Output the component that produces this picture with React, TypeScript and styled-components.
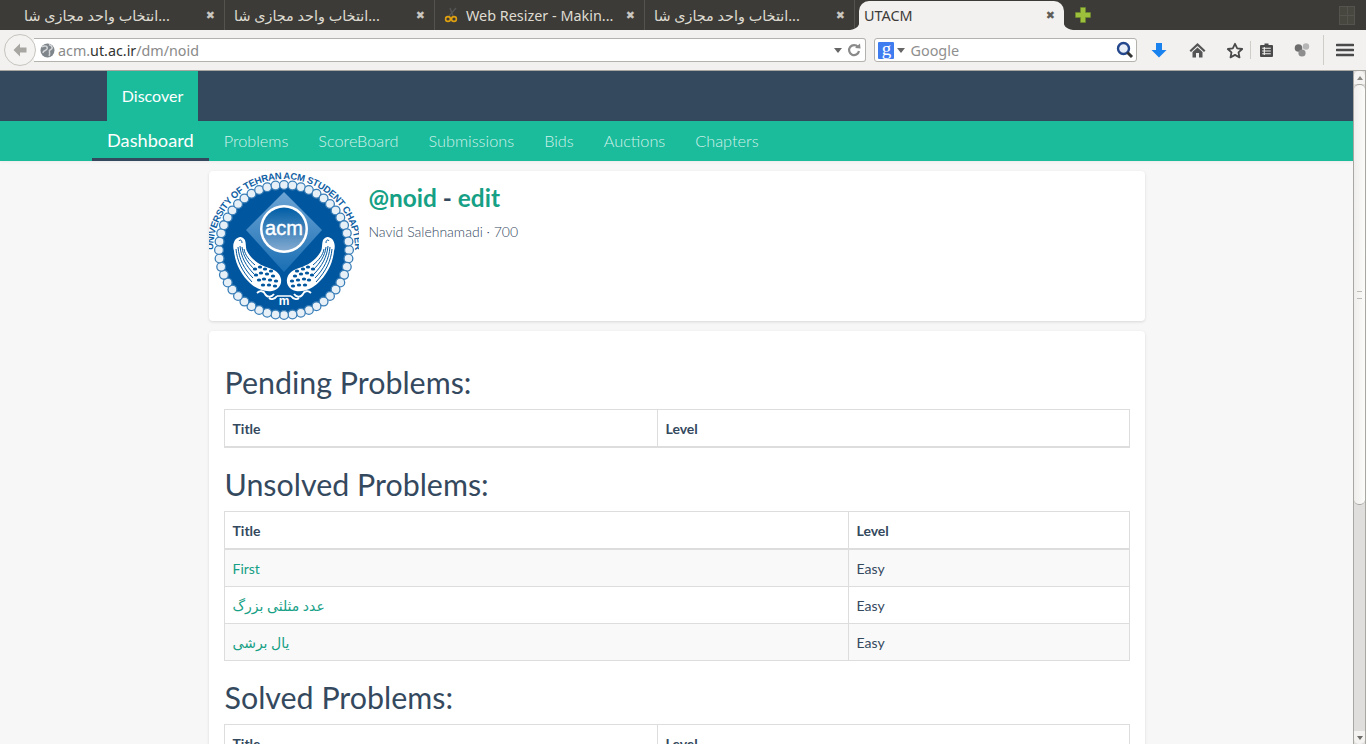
import React from 'react'
import styled, { createGlobalStyle } from 'styled-components'

const Global = createGlobalStyle`
  html, body {
    margin: 0;
    height: 100%;
    overflow: hidden;
    background: #f7f7f7;
  }
  * {
    box-sizing: border-box;
  }
`

const Window = styled.div`
  width: 1366px;
  height: 744px;
  display: flex;
  flex-direction: column;
  overflow: hidden;
`

/* browser chrome */
const TabBar = styled.div`
  height: 30px;
  flex: none;
  background: #3c3b37;
  display: flex;
  align-items: stretch;
  padding-left: 15px;
  font-family: 'Noto Sans', 'DejaVu Sans', sans-serif;
  font-size: 14.4px;
`

const Tab = styled.div<{ $active?: boolean }>`
  position: relative;
  width: ${(p) => (p.$active ? '205px' : '210px')};
  margin-left: ${(p) => (p.$active ? '4px' : '0')};
  display: flex;
  align-items: center;
  justify-content: space-between;
  padding: 0 ${(p) => (p.$active ? '9px 0 5px' : '9px 0 9px')};
  color: ${(p) => (p.$active ? '#3c3b37' : '#dfdbd2')};
  background: ${(p) => (p.$active ? '#f2f1f0' : 'transparent')};
  border-radius: ${(p) => (p.$active ? '10px 10px 0 0' : '0')};
  border-right: ${(p) => (p.$active ? 'none' : '1px solid #55534e')};
  margin-top: ${(p) => (p.$active ? '1px' : '0')};
`

const TabLabel = styled.span`
  display: flex;
  align-items: center;
  gap: 6px;
  white-space: nowrap;
  direction: ltr;
`

const CloseMark = styled.span<{ $dark?: boolean }>`
  font-family: 'DejaVu Sans', sans-serif;
  font-size: 11px;
  font-weight: 700;
  color: ${(p) => (p.$dark ? '#5e5d59' : '#c9c6bf')};
`

const Flare = styled.svg<{ $right?: boolean }>`
  position: absolute;
  bottom: 0;
  ${(p) => (p.$right ? 'right: -9px;' : 'left: -9px;')}
`

const PlusWrap = styled.div`
  margin-left: 11px;
  display: flex;
  align-items: center;
`

const TabSpacer = styled.div`
  flex: 1;
`

const GridIcon = styled.div`
  width: 16px;
  margin: 6px 11px 0 0;
  height: 19px;
  display: grid;
  grid-template-columns: 1fr 1fr;
  grid-template-rows: 8px 8px;
  gap: 1px;
  border: 1px solid #55534e;
  background: #55534e;
  span {
    background: #47463f;
  }
`

const Toolbar = styled.div`
  height: 41px;
  flex: none;
  background: #f2f1f0;
  border-bottom: 1px solid #a8a6a0;
  display: flex;
  align-items: center;
  padding: 0 0 0 4px;
  font-family: 'Noto Sans', 'DejaVu Sans', sans-serif;
`

const BackButton = styled.div`
  width: 32px;
  height: 32px;
  flex: none;
  border-radius: 50%;
  background: #f4f3f2;
  border: 1px solid #c6c4be;
  display: flex;
  align-items: center;
  justify-content: center;
  position: relative;
  z-index: 1;
`

const UrlBar = styled.div`
  width: 834px;
  height: 24px;
  margin-left: -2px;
  background: #fff;
  border: 1px solid #b4b2ac;
  border-left: none;
  border-radius: 0 3px 3px 0;
  display: flex;
  align-items: center;
  padding: 0 4px 0 6px;
  font-size: 14.3px;
  color: #8a8a8a;
`

const Globe = styled.svg`
  margin-right: 3px;
  flex: none;
`

const Host = styled.span`
  color: #333;
`

const Grow = styled.div`
  flex: 1;
`

const SearchBar = styled.div`
  width: 263px;
  height: 24px;
  margin-left: 8px;
  background: #fff;
  border: 1px solid #b4b2ac;
  border-radius: 3px;
  display: flex;
  align-items: center;
  padding: 0 2px 0 3px;
  font-size: 14.4px;
  color: #8f8f8f;
`

const GoogleBadge = styled.span`
  width: 16px;
  height: 17px;
  background: #3f7cf0;
  color: #fff;
  font-family: 'Liberation Serif', serif;
  font-size: 19px;
  line-height: 13px;
  text-align: center;
  border-radius: 1px;
`

const Caret = styled.span`
  width: 0;
  height: 0;
  margin: 1px 5px 0 3px;
  border-left: 4px solid transparent;
  border-right: 4px solid transparent;
  border-top: 5px solid #666;
`

const ToolIcons = styled.div`
  display: flex;
  align-items: center;
  margin-left: 13px;
  height: 30px;
`

const ToolIcon = styled.div<{ $w: number }>`
  width: ${(p) => p.$w}px;
  display: flex;
  justify-content: center;
`

const ToolSep = styled.div<{ $h: number }>`
  width: 1px;
  height: ${(p) => p.$h}px;
  background: #cfcdc8;
`

/* page */
const Viewport = styled.div`
  flex: 1;
  min-height: 0;
  display: flex;
`

const Page = styled.div`
  flex: 1;
  min-width: 0;
  overflow: hidden;
  background: #f7f7f7;
  font-family: 'Lato', 'DejaVu Sans', sans-serif;
  color: #34495e;
`

const TopBar = styled.div`
  height: 50px;
  background: #34495e;
  padding-left: 107px;
  display: flex;
`

const TopLink = styled.div`
  width: 91px;
  padding-bottom: 2px;
  background: #1abc9c;
  color: #fff;
  font-size: 16px;
  display: flex;
  align-items: center;
  justify-content: center;
`

const SubNav = styled.nav`
  height: 40px;
  background: #1abc9c;
  padding-left: 92px;
  display: flex;
  box-shadow: 0 1px 3px rgba(0, 0, 0, 0.05);
`

const SubLink = styled.a<{ $active?: boolean }>`
  padding: ${(p) => (p.$active ? '0 15px' : '0 15px 1px')};
  display: flex;
  align-items: center;
  color: ${(p) => (p.$active ? '#fff' : 'rgba(255, 255, 255, 0.8)')};
  font-size: ${(p) => (p.$active ? '18.2px' : '16.3px')};
  font-weight: ${(p) => (p.$active ? 400 : 300)};
  border-bottom: ${(p) => (p.$active ? '3px solid #34495e' : 'none')};
`

const Card = styled.section`
  width: 936px;
  margin: 10px auto 0;
  background: #fff;
  border-radius: 4px;
  box-shadow: 0 1px 3px rgba(0, 0, 0, 0.13);
`

const ProfileCard = styled(Card)`
  height: 150px;
  display: flex;
`

const ProfileText = styled.div`
  margin-left: 10px;
  padding-top: 12px;
`

const Handle = styled.h2`
  margin: 0;
  font-size: 24.4px;
  line-height: 30px;
  font-weight: 700;
  color: #34495e;
  a {
    color: #16a085;
  }
`

const Meta = styled.p`
  margin: 9px 0 0;
  font-size: 14px;
  line-height: 20px;
  font-weight: 300;
  color: #34495e;
`

const ProblemsCard = styled(Card)`
  padding: 15px 15px 0 15px;
  height: 460px;
`

const Heading = styled.h3`
  margin: 20px 0 10px 1px;
  font-size: 30.4px;
  line-height: 33px;
  font-weight: 400;
  color: #34495e;
`

const Table = styled.table`
  width: 906px;
  table-layout: fixed;
  border-collapse: collapse;
  border: 1px solid #ddd;
  margin-bottom: 20px;
  font-size: 14px;
  line-height: 20px;
`

const Th = styled.th<{ $w?: number }>`
  width: ${(p) => (p.$w ? `${p.$w}px` : 'auto')};
  text-align: left;
  padding: 9px 8px 7px;
  font-weight: 700;
  border: 1px solid #ddd;
  border-bottom: 2px solid #ddd;
`

const Row = styled.tr<{ $odd?: boolean }>`
  background: ${(p) => (p.$odd ? '#f9f9f9' : '#fff')};
`

const Td = styled.td`
  padding: 9px 8px 7px;
  border: 1px solid #ddd;
`

const ProblemLink = styled.a`
  color: #16a085;
`

/* scrollbar */
const Scrollbar = styled.div`
  width: 13px;
  flex: none;
  display: flex;
  flex-direction: column;
  background: #dfdedc;
  border-left: 1px solid #a9a7a2;
  border-right: 1px solid #a9a7a2;
`

const ScrollEnd = styled.div<{ $top?: boolean }>`
  height: 13px;
  flex: none;
  background: #f4f3f2;
  display: flex;
  align-items: center;
  justify-content: center;
  border-radius: ${(p) => (p.$top ? '5px 5px 0 0' : '0 0 5px 5px')};
`

const ScrollArrow = styled.span<{ $up?: boolean }>`
  width: 0;
  height: 0;
  border-left: 3px solid transparent;
  border-right: 3px solid transparent;
  ${(p) => (p.$up ? 'border-bottom: 4px solid #8a8883;' : 'border-top: 4px solid #6e6c68;')}
`

const ScrollThumb = styled.div`
  height: 421px;
  flex: none;
  background: linear-gradient(90deg, #efeeec, #fbfbfa);
  border: 1px solid #a9a7a2;
  border-left: none;
  border-right: none;
  border-radius: 5px;
  display: flex;
  align-items: center;
  justify-content: center;
  &::after {
    content: '';
    width: 5px;
    height: 6px;
    border-top: 1px solid #bdbbb6;
    border-bottom: 1px solid #bdbbb6;
  }
`

const ScrollTrack = styled.div`
  flex: 1;
`

const Scissors = () => (
  <svg width="16" height="16" viewBox="0 0 16 16">
    <path d="M5 9 L12 1 M9 9 L6 1" stroke="#555" strokeWidth="1.4" fill="none" />
    <circle cx="4" cy="12" r="2.4" stroke="#e0a010" strokeWidth="1.6" fill="none" />
    <circle cx="10" cy="12" r="2.4" stroke="#e0a010" strokeWidth="1.6" fill="none" />
  </svg>
)

const TabFlare = ({ right }: { right?: boolean }) => (
  <Flare $right={right} width="10" height="12" viewBox="0 0 10 12">
    <path
      d={right ? 'M0 0 C0 8 3 11 10 12 L0 12 Z' : 'M10 0 C10 8 7 11 0 12 L10 12 Z'}
      fill="#f2f1f0"
    />
  </Flare>
)

const scales = [
  [46, 98], [51, 96], [56, 98], [62, 100], [47, 104], [52, 102], [58, 103], [64, 105],
  [50, 109], [55, 108], [61, 109], [67, 110], [54, 114], [60, 114], [66, 115],
]

const Wing = () => (
  <g>
    <path
      d="M31 66 C25 67 23 74 25 80 C26 92 32 104 42 113 C48 118 55 121 63 120 C69 119 73 114 72 108 C71 102 66 99 60 97 C50 94 42 88 38 80 C36 76 38 69 34 67 C33 66 32 66 31 66 Z"
      fill="#fff"
    />
    <path
      d="M27 78 C28 90 33 100 43 111 M29 76 C30 88 35 98 44 107 M31 75 C32 86 37 95 45 103 M33 76 C34 85 39 92 46 99 M35 78 C36 84 40 89 46 94"
      stroke="#01579f"
      strokeWidth="1"
      fill="none"
    />
    <path d="M30 70 C31 68 33 69 33 72" stroke="#01579f" strokeWidth="1" fill="none" />
    {scales.map(([x, y], i) => (
      <ellipse key={i} cx={x} cy={y} rx="2.2" ry="1.5" fill="#01579f" />
    ))}
    <path
      d="M48 122 C51 119 55 120 56 123 C58 127 63 126 65 123 M60 127 C62 129 66 128 68 125"
      stroke="#fff"
      strokeWidth="1.8"
      fill="none"
    />
  </g>
)

const Logo = () => {
  const beads = Array.from({ length: 48 }, (_, i) => {
    const a = (i / 48) * Math.PI * 2
    return { x: 75 + 65 * Math.cos(a), y: 79 + 65 * Math.sin(a) }
  })
  return (
    <svg width="150" height="150" viewBox="0 0 150 150" style={{ flex: 'none', borderRadius: 4 }}>
      <defs>
        <path id="ring" d="M 4 79 A 71 71 0 0 1 146 79" />
        <linearGradient id="bulb" x1="0" y1="0" x2="0" y2="1">
          <stop offset="0" stopColor="#005ea6" />
          <stop offset="1" stopColor="#82a9d0" />
        </linearGradient>
        <linearGradient id="gem" x1="0" y1="0" x2="0" y2="1">
          <stop offset="0" stopColor="#6da4d4" />
          <stop offset="1" stopColor="#1a6fb4" />
        </linearGradient>
      </defs>
      <text
        fontFamily="'Liberation Sans', sans-serif"
        fontSize="9.5"
        fontWeight="700"
        fill="#1060a4"
        textLength="223"
        lengthAdjust="spacing"
      >
        <textPath href="#ring" startOffset="0">
          UNIVERSITY OF TEHRAN  ACM STUDENT CHAPTER
        </textPath>
      </text>
      <circle cx="75" cy="79" r="65" fill="#01579f" />
      {beads.map((b, i) => (
        <circle key={i} cx={b.x} cy={b.y} r="4.4" fill="#e8f0f7" stroke="#3b7fb8" strokeWidth="1.3" />
      ))}
      <path d="M75 21 L113 59 L75 101 L37 59 Z" fill="url(#gem)" />
      <circle cx="75" cy="58" r="24" fill="#fff" />
      <circle cx="75" cy="58" r="21.5" fill="url(#bulb)" />
      <text
        x="75"
        y="64"
        textAnchor="middle"
        fontFamily="'Liberation Sans', sans-serif"
        fontSize="20"
        fill="#fff"
        stroke="#fff"
        strokeWidth="0.4"
      >
        acm
      </text>
      <Wing />
      <g transform="translate(150 0) scale(-1 1)">
        <Wing />
      </g>
      <text
        x="75"
        y="134"
        textAnchor="middle"
        fontFamily="'Liberation Sans', sans-serif"
        fontSize="12"
        fontWeight="700"
        fill="#fff"
      >
        m
      </text>
      <path d="M68 125 H82" stroke="#fff" strokeWidth="1.6" />
    </svg>
  )
}

const ArabicTab = () => (
  <Tab>
    <TabLabel>انتخاب واحد مجازی شا...</TabLabel>
    <CloseMark>✖</CloseMark>
  </Tab>
)

export default function App() {
  return (
    <Window>
      <Global />
      <TabBar>
        <ArabicTab />
        <ArabicTab />
        <Tab>
          <TabLabel>
            <Scissors />
            Web Resizer - Makin...
          </TabLabel>
          <CloseMark>✖</CloseMark>
        </Tab>
        <ArabicTab />
        <Tab $active>
          <TabFlare />
          <TabLabel>UTACM</TabLabel>
          <CloseMark $dark>✖</CloseMark>
          <TabFlare right />
        </Tab>
        <PlusWrap>
          <svg width="16" height="16" viewBox="0 0 16 16">
            <path d="M5.5 0.5h5v5h5v5h-5v5h-5v-5h-5v-5h5z" fill="#9cc03c" stroke="#6f8f2a" strokeWidth="0.6" />
          </svg>
        </PlusWrap>
        <TabSpacer />
        <GridIcon>
          <span />
          <span />
          <span />
          <span />
        </GridIcon>
      </TabBar>

      <Toolbar>
        <BackButton>
          <svg width="16" height="16" viewBox="0 0 16 16">
            <path d="M8 1.5 L1.5 8 L8 14.5 V10.5 H14.5 V5.5 H8 Z" fill="#a8a6a1" />
          </svg>
        </BackButton>
        <UrlBar>
          <Globe width="15" height="15" viewBox="0 0 15 15">
            <circle cx="7.5" cy="7.5" r="7" fill="#7e868c" />
            <path d="M2 4 C5 2 8 3 7 6 C6 8 3 7 3 10 M9 1.5 C13 3 13 6 10 7 C8 8 11 10 9 13" stroke="#d4d6d8" strokeWidth="1.5" fill="none" />
          </Globe>
          <span>
            acm.<Host>ut.ac.ir</Host>/dm/noid
          </span>
          <Grow />
          <Caret />
          <svg width="14" height="14" viewBox="0 0 14 14">
            <path d="M11 4 A5 5 0 1 0 12 8" stroke="#8a8a8a" strokeWidth="2.2" fill="none" />
            <path d="M8 5 L13.5 5.5 L13 0.5 Z" fill="#8a8a8a" />
          </svg>
        </UrlBar>
        <SearchBar>
          <GoogleBadge>g</GoogleBadge>
          <Caret />
          <span>Google</span>
          <Grow />
          <svg width="18" height="18" viewBox="0 0 18 18">
            <circle cx="7.5" cy="7.5" r="5.5" fill="#e6edf7" stroke="#23468c" strokeWidth="2.4" />
            <path d="M11.5 11.5 L16 16" stroke="#333" strokeWidth="3" />
          </svg>
        </SearchBar>
        <ToolIcons>
          <ToolIcon $w={18}>
            <svg width="16" height="16" viewBox="0 0 16 16">
              <path d="M5 1 H11 V8 H15.5 L8 15.5 L0.5 8 H5 Z" fill="#1a82ee" />
            </svg>
          </ToolIcon>
          <ToolIcon $w={58}>
            <svg width="17" height="16" viewBox="0 0 17 16">
              <path d="M8.5 1 L0.5 8.5 L2 10 L8.5 4 L15 10 L16.5 8.5 Z M3.5 10 L8.5 5.5 L13.5 10 V15.5 H10 V11 H7 V15.5 H3.5 Z" fill="#555" />
            </svg>
          </ToolIcon>
          <ToolIcon $w={18}>
            <svg width="18" height="17" viewBox="0 0 18 17">
              <path d="M9 1.8 L11.2 6.4 L16.2 7 L12.5 10.4 L13.5 15.4 L9 12.9 L4.5 15.4 L5.5 10.4 L1.8 7 L6.8 6.4 Z" fill="#f4f3f2" stroke="#4a4a4a" strokeWidth="1.8" strokeLinejoin="round" />
            </svg>
          </ToolIcon>
          <ToolIcon $w={6} />
          <ToolSep $h={18} />
          <ToolIcon $w={30}>
            <svg width="15" height="16" viewBox="0 0 15 16">
              <path d="M5.5 1.5 H9.5 V3 H13 A1 1 0 0 1 14 4 V14 A1 1 0 0 1 13 15 H2 A1 1 0 0 1 1 14 V4 A1 1 0 0 1 2 3 H5.5 Z" fill="#4a4a4a" />
              <path d="M3.2 6.2 H11.8 M3.2 9 H11.8 M3.2 11.8 H11.8 M5.3 5 V13" stroke="#f2f1f0" strokeWidth="1.1" />
            </svg>
          </ToolIcon>
          <ToolIcon $w={42}>
            <svg width="16" height="16" viewBox="0 0 16 16">
              <circle cx="4.5" cy="6" r="3.8" fill="#6d6d6d" />
              <circle cx="12" cy="4.5" r="3.2" fill="#b5b5b5" />
              <circle cx="8" cy="11" r="3.6" fill="#8e8e8e" />
            </svg>
          </ToolIcon>
          <ToolSep $h={30} />
          <ToolIcon $w={42}>
            <svg width="18" height="14" viewBox="0 0 18 14">
              <path d="M1 2 H17 M1 7 H17 M1 12 H17" stroke="#4a4a4a" strokeWidth="2.6" strokeLinecap="round" />
            </svg>
          </ToolIcon>
        </ToolIcons>
      </Toolbar>

      <Viewport>
        <Page>
          <TopBar>
            <TopLink>Discover</TopLink>
          </TopBar>
          <SubNav>
            <SubLink $active>Dashboard</SubLink>
            <SubLink>Problems</SubLink>
            <SubLink>ScoreBoard</SubLink>
            <SubLink>Submissions</SubLink>
            <SubLink>Bids</SubLink>
            <SubLink>Auctions</SubLink>
            <SubLink>Chapters</SubLink>
          </SubNav>

          <ProfileCard>
            <Logo />
            <ProfileText>
              <Handle>
                <a>@noid</a> - <a>edit</a>
              </Handle>
              <Meta>Navid Salehnamadi · 700</Meta>
            </ProfileText>
          </ProfileCard>

          <ProblemsCard>
            <Heading>Pending Problems:</Heading>
            <Table>
              <thead>
                <tr>
                  <Th $w={433}>Title</Th>
                  <Th>Level</Th>
                </tr>
              </thead>
            </Table>

            <Heading>Unsolved Problems:</Heading>
            <Table>
              <thead>
                <tr>
                  <Th $w={624}>Title</Th>
                  <Th>Level</Th>
                </tr>
              </thead>
              <tbody>
                <Row $odd>
                  <Td>
                    <ProblemLink>First</ProblemLink>
                  </Td>
                  <Td>Easy</Td>
                </Row>
                <Row>
                  <Td>
                    <ProblemLink>عدد مثلثی بزرگ</ProblemLink>
                  </Td>
                  <Td>Easy</Td>
                </Row>
                <Row $odd>
                  <Td>
                    <ProblemLink>یال برشی</ProblemLink>
                  </Td>
                  <Td>Easy</Td>
                </Row>
              </tbody>
            </Table>

            <Heading>Solved Problems:</Heading>
            <Table>
              <thead>
                <tr>
                  <Th $w={433}>Title</Th>
                  <Th>Level</Th>
                </tr>
              </thead>
            </Table>
          </ProblemsCard>
        </Page>
        <Scrollbar>
          <ScrollEnd $top>
            <ScrollArrow $up />
          </ScrollEnd>
          <ScrollThumb />
          <ScrollTrack />
          <ScrollEnd>
            <ScrollArrow />
          </ScrollEnd>
        </Scrollbar>
      </Viewport>
    </Window>
  )
}
